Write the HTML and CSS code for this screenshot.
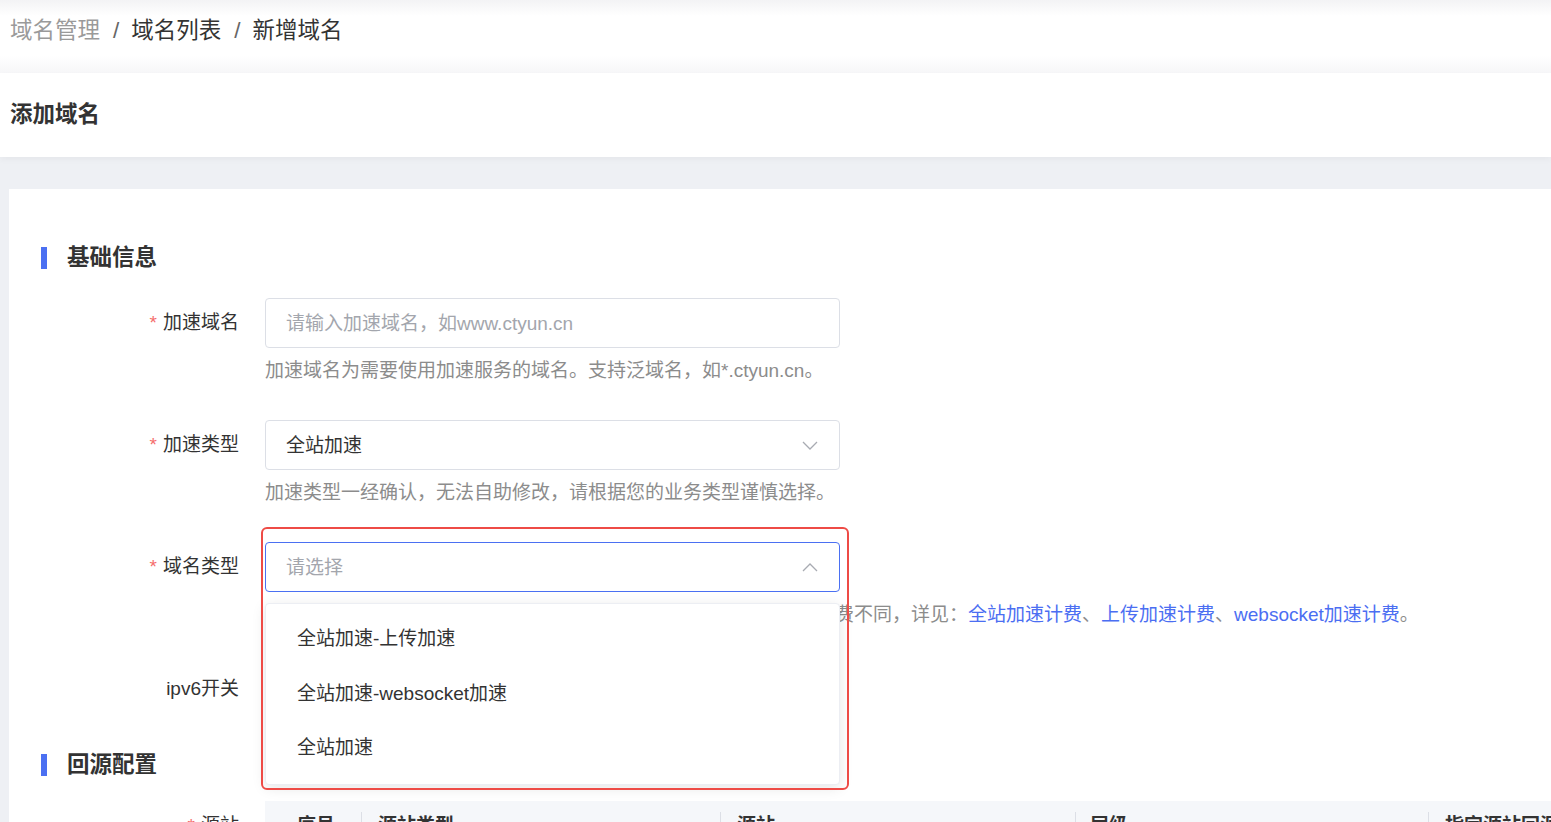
FILE: index.html
```html
<!DOCTYPE html>
<html lang="zh-CN">
<head>
<meta charset="utf-8">
<title>新增域名</title>
<link rel="stylesheet" href="styles.css">
</head>
<body>
<div class="page">
  <div class="breadcrumb">
    <span class="crumb muted">域名管理</span><span class="sep">/</span><span class="crumb">域名列表</span><span class="sep">/</span><span class="crumb">新增域名</span>
  </div>
  <div class="title-bar"><h1 class="title">添加域名</h1></div>
  <div class="content">
    <div class="card">
      <div class="section-title"><span class="bar"></span>基础信息</div>

      <div class="form-item">
        <div class="label"><span class="star">*</span>加速域名</div>
        <div class="control">
          <div class="input placeholder">请输入加速域名，如www.ctyun.cn</div>
          <div class="help">加速域名为需要使用加速服务的域名。支持泛域名，如*.ctyun.cn。</div>
        </div>
      </div>

      <div class="form-item">
        <div class="label"><span class="star">*</span>加速类型</div>
        <div class="control">
          <div class="input select">
            <span>全站加速</span>
            <svg class="chev" width="16" height="9" viewBox="0 0 16 9"><path d="M1 1 L8 8 L15 1" fill="none" stroke="#a8abb2" stroke-width="1.3"/></svg>
          </div>
          <div class="help">加速类型一经确认，无法自助修改，请根据您的业务类型谨慎选择。</div>
        </div>
      </div>

      <div class="form-item">
        <div class="label"><span class="star">*</span>域名类型</div>
        <div class="control">
          <div class="select-wrap">
            <div class="input select focused placeholder">
              <span>请选择</span>
              <svg class="chev" width="16" height="9" viewBox="0 0 16 9"><path d="M1 8 L8 1 L15 8" fill="none" stroke="#a8abb2" stroke-width="1.3"/></svg>
            </div>
            <ul class="dropdown">
              <li class="option">全站加速-上传加速</li>
              <li class="option">全站加速-websocket加速</li>
              <li class="option">全站加速</li>
            </ul>
            <div class="highlight"></div>
          </div>
          <div class="help">域名类型确认后不可修改，请根据业务场景选择，不同域名类型的计费不同，详见：<a class="link">全站加速计费</a>、<a class="link">上传加速计费</a>、<a class="link">websocket加速计费</a>。</div>
        </div>
      </div>

      <div class="form-item">
        <div class="label">ipv6开关</div>
        <div class="control">
          <div class="switch-row"><span class="switch"></span></div>
        </div>
      </div>

      <div class="section-title second"><span class="bar"></span>回源配置</div>

      <div class="form-item table-item">
        <div class="label"><span class="star">*</span>源站</div>
        <div class="control">
          <div class="table-head">
            <div class="th c1">序号</div>
            <div class="th c2">源站类型</div>
            <div class="th c3">源站</div>
            <div class="th c4">层级</div>
            <div class="th c5">指定源站回源</div>
          </div>
        </div>
      </div>
    </div>
  </div>
</div>
</body>
</html>
```
FILE: styles.css
```css
* { box-sizing: border-box; margin: 0; padding: 0; }
html, body { height: 100%; overflow: hidden; }
body {
  font-family: "Liberation Sans", "Noto Sans CJK SC", sans-serif;
  color: #333;
  background: #eef0f4;
}
.page { height: 822px; display: flex; flex-direction: column; overflow: hidden; }

.breadcrumb {
  flex-shrink: 0;
  height: 73px;
  padding: 16px 10px 0;
  font-size: 22.5px;
  line-height: 30px;
  display: flex;
  align-items: flex-start;
  background: linear-gradient(to bottom, #f3f3f5 0, #fff 16px, #fff 56px, #f6f6f8 73px);
}
.crumb { color: #333; }
.crumb.muted { color: #9a9a9a; }
.sep { color: #666; margin: 0 12px 0 13px; }

.title-bar {
  flex-shrink: 0;
  height: 84px;
  background: #fff;
  padding-left: 10px;
  box-shadow: 0 3px 6px rgba(0, 0, 0, 0.035);
  position: relative;
  z-index: 1;
}
.title { font-size: 22.5px; font-weight: bold; line-height: 84px; color: #333; }

.content { flex: 1 0 auto; padding: 32px 0 0 9px; background: #eef0f4; }
.card { background: #fff; min-height: 100%; padding: 58px 0 0 32px; }

.section-title {
  display: flex;
  align-items: center;
  height: 22px;
  font-size: 22.5px;
  font-weight: bold;
  line-height: 22px;
  color: #333;
}
.section-title .bar { width: 6px; height: 22px; background: #4b70f2; margin-right: 20px; }
.section-title.second { margin-top: 40px; }

.form-item { display: flex; margin-top: 29px; }
.form-item + .form-item { margin-top: 35px; }
.form-item.table-item { margin-top: 25px; }
.label {
  width: 224px;
  padding-right: 26px;
  text-align: right;
  font-size: 19px;
  line-height: 50px;
  color: #333;
  flex-shrink: 0;
}
.star { color: #f56c6c; margin-right: 6px; }
.control { flex: 1; min-width: 0; }

.input {
  width: 575px;
  height: 50px;
  border: 1px solid #dcdfe6;
  border-radius: 4px;
  padding: 1px 20px 0;
  font-size: 19px;
  line-height: 47px;
  color: #333;
  background: #fff;
}
.input.placeholder { color: #a3a6ad; }
.select { display: flex; align-items: center; justify-content: space-between; padding-right: 21px; }
.select.focused { border-color: #4b70f2; }
.chev { display: block; }

.help { margin-top: 9px; font-size: 19px; line-height: 28px; color: #8c8c8c; white-space: nowrap; }
.link { color: #4b6ef2; text-decoration: none; }

.select-wrap { position: relative; width: 575px; }
.dropdown {
  position: absolute;
  left: 0;
  top: calc(100% + 11px);
  width: 575px;
  background: #fff;
  border: 1px solid #eceef3;
  border-radius: 4px;
  box-shadow: 0 3px 14px rgba(0, 0, 0, 0.1);
  padding: 8px 0 8px;
  list-style: none;
  z-index: 5;
}
.option { height: 54.5px; line-height: 54.5px; padding-left: 31px; font-size: 19px; color: #333; }
.highlight {
  position: absolute;
  left: -4px;
  top: -15px;
  width: 588px;
  height: 263px;
  border: 2px solid #ee4b46;
  border-radius: 6px;
  z-index: 6;
  pointer-events: none;
}

.switch-row { height: 50px; display: flex; align-items: center; }
.switch { width: 44px; height: 22px; border-radius: 11px; background: #dcdfe6; }

.table-head {
  display: flex;
  width: 1400px;
  height: 50px;
  background: #f5f7fa;
  font-size: 19px;
  font-weight: bold;
  line-height: 50px;
  color: #333;
  white-space: nowrap;
}
.th { position: relative; padding-left: 17px; }
.th + .th::before {
  content: "";
  position: absolute;
  left: 0;
  top: 11px;
  bottom: 11px;
  width: 1px;
  background: #dcdfe6;
}
.c1 { width: 96px; padding-left: 32px; }
.c2 { width: 359px; }
.c3 { width: 355px; }
.c4 { width: 353px; padding-left: 15px; }
.c5 { width: 237px; }
```
